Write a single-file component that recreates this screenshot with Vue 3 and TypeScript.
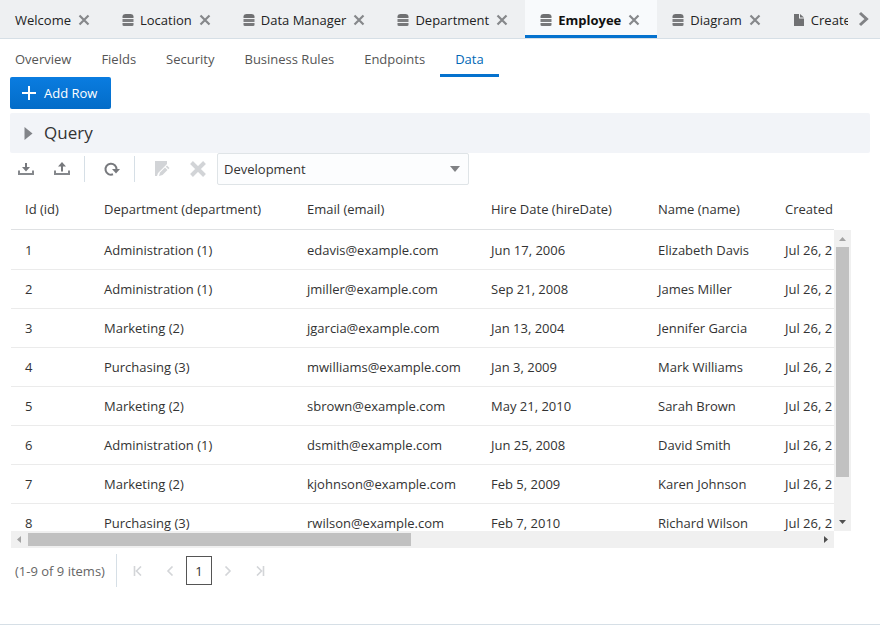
<script setup lang="ts">
import { ref } from 'vue'

interface DocumentTab {
  label: string
  icon: 'data' | 'page' | null
}

interface Employee {
  id: number
  department: string
  email: string
  hireDate: string
  name: string
  created: string
}

const documents: DocumentTab[] = [
  { label: 'Welcome', icon: null },
  { label: 'Location', icon: 'data' },
  { label: 'Data Manager', icon: 'data' },
  { label: 'Department', icon: 'data' },
  { label: 'Employee', icon: 'data' },
  { label: 'Diagram', icon: 'data' },
  { label: 'Create', icon: 'page' },
]
const activeDocument = ref('Employee')

const sections = ['Overview', 'Fields', 'Security', 'Business Rules', 'Endpoints', 'Data']
const activeSection = ref('Data')

const environment = ref('Development')

const columns = [
  { key: 'id', label: 'Id (id)' },
  { key: 'department', label: 'Department (department)' },
  { key: 'email', label: 'Email (email)' },
  { key: 'hire', label: 'Hire Date (hireDate)' },
  { key: 'name', label: 'Name (name)' },
  { key: 'created', label: 'Created' },
]

const employees: Employee[] = [
  { id: 1, department: 'Administration (1)', email: 'edavis@example.com', hireDate: 'Jun 17, 2006', name: 'Elizabeth Davis', created: 'Jul 26, 2' },
  { id: 2, department: 'Administration (1)', email: 'jmiller@example.com', hireDate: 'Sep 21, 2008', name: 'James Miller', created: 'Jul 26, 2' },
  { id: 3, department: 'Marketing (2)', email: 'jgarcia@example.com', hireDate: 'Jan 13, 2004', name: 'Jennifer Garcia', created: 'Jul 26, 2' },
  { id: 4, department: 'Purchasing (3)', email: 'mwilliams@example.com', hireDate: 'Jan 3, 2009', name: 'Mark Williams', created: 'Jul 26, 2' },
  { id: 5, department: 'Marketing (2)', email: 'sbrown@example.com', hireDate: 'May 21, 2010', name: 'Sarah Brown', created: 'Jul 26, 2' },
  { id: 6, department: 'Administration (1)', email: 'dsmith@example.com', hireDate: 'Jun 25, 2008', name: 'David Smith', created: 'Jul 26, 2' },
  { id: 7, department: 'Marketing (2)', email: 'kjohnson@example.com', hireDate: 'Feb 5, 2009', name: 'Karen Johnson', created: 'Jul 26, 2' },
  { id: 8, department: 'Purchasing (3)', email: 'rwilson@example.com', hireDate: 'Feb 7, 2010', name: 'Richard Wilson', created: 'Jul 26, 2' },
]
</script>

<template>
  <div class="page">
    <header class="doc-bar">
      <nav class="doc-tabs" aria-label="Open documents">
        <div
          v-for="doc in documents"
          :key="doc.label"
          class="doc-tab"
          :class="{ active: doc.label === activeDocument }"
        >
          <button type="button" class="doc-label" @click="activeDocument = doc.label">
            <svg v-if="doc.icon === 'data'" width="12" height="12" viewBox="0 0 12 12" aria-hidden="true">
              <path d="M0.500 4V2Q1 0 3.500 0H8.500Q11 0 11.500 2V4Z" fill="#6f7072" />
              <rect x="0.500" y="5" width="11" height="3" fill="#7e7f81" />
              <path d="M0.500 9H11.500V11Q11.500 12 10 12H2Q.5 12 .5 11Z" fill="#77787a" />
            </svg>
            <svg v-else-if="doc.icon === 'page'" width="12" height="12" viewBox="0 0 12 12" aria-hidden="true">
              <path d="M1 0H6V4.500H11V12H1Z" fill="#707173" />
              <path d="M7 0L11 3.500H7Z" fill="#707173" />
            </svg>
            <span>{{ doc.label }}</span>
          </button>
          <button type="button" class="doc-close" :aria-label="`Close ${doc.label}`">
            <svg width="12" height="12" viewBox="0 0 12 12" aria-hidden="true">
              <path d="M1.500 1.500L10.500 10.500M10.500 1.500L1.500 10.500" stroke="#86888b" stroke-width="2.200" />
            </svg>
          </button>
        </div>
      </nav>
      <button type="button" class="doc-next" aria-label="Next tabs">
        <svg width="12" height="16" viewBox="0 0 12 16" aria-hidden="true">
          <path d="M2 2L8.500 8L2 14" fill="none" stroke="#808285" stroke-width="3" />
        </svg>
      </button>
    </header>

    <nav class="sections" aria-label="Business object">
      <button
        v-for="section in sections"
        :key="section"
        type="button"
        class="section"
        :class="{ active: section === activeSection }"
        @click="activeSection = section"
      >{{ section }}</button>
    </nav>

    <main class="content">
      <button type="button" class="add-row">
        <svg width="14" height="14" viewBox="0 0 14 14" aria-hidden="true">
          <path d="M7 0V14M0 7H14" stroke="#fff" stroke-width="2" />
        </svg>
        <span>Add Row</span>
      </button>

      <button type="button" class="query">
        <svg width="9" height="13" viewBox="0 0 9 13" aria-hidden="true">
          <path d="M0.500 0L8.500 6.500L0.500 13Z" fill="#828489" />
        </svg>
        <span>Query</span>
      </button>

      <div class="toolbar">
        <div class="group">
          <button type="button" class="tool" aria-label="Import">
            <svg width="16" height="16" viewBox="0 0 16 16" aria-hidden="true">
              <path d="M1 9.500V13H15V9.500" fill="none" stroke="#85888c" stroke-width="2" />
              <path d="M7 2H9V6H12L8 10.500L4 6H7Z" fill="#77797d" />
            </svg>
          </button>
          <button type="button" class="tool" aria-label="Export">
            <svg width="16" height="16" viewBox="0 0 16 16" aria-hidden="true">
              <path d="M1 9.500V13H15V9.500" fill="none" stroke="#85888c" stroke-width="2" />
              <path d="M7 10.500H9V5.500H12L8 1L4 5.500H7Z" fill="#77797d" />
            </svg>
          </button>
        </div>
        <div class="group">
          <button type="button" class="tool" aria-label="Refresh">
            <svg width="16" height="16" viewBox="0 0 16 16" aria-hidden="true">
              <path d="M9 13.300A5.500 5.500 0 1 1 12.500 8.500" fill="none" stroke="#77797d" stroke-width="2" />
              <path d="M8 8H16L12 12.500Z" fill="#77797d" />
            </svg>
          </button>
        </div>
        <div class="group last">
          <button type="button" class="tool" aria-label="Edit" disabled>
            <svg width="16" height="16" viewBox="0 0 16 16" aria-hidden="true">
              <path d="M1 0H13V3L4 12L3 15H1Z" fill="#d2d4d7" />
              <path d="M5 15L6 11.500L11 6.500L13.500 9L8.500 14Z" fill="#d2d4d7" />
              <path d="M11.800 5.700L13 4.500L15.500 7L14.300 8.200Z" fill="#d2d4d7" />
            </svg>
          </button>
          <button type="button" class="tool" aria-label="Delete" disabled>
            <svg width="16" height="16" viewBox="0 0 16 16" aria-hidden="true">
              <path d="M1.500 1.500L14.500 14.500M14.500 1.500L1.500 14.500" stroke="#d2d4d7" stroke-width="4" />
            </svg>
          </button>
        </div>
        <div class="picker">
          <select v-model="environment" aria-label="Environment">
            <option>Development</option>
          </select>
          <svg class="picker-arrow" width="10" height="6" viewBox="0 0 10 6" aria-hidden="true">
            <path d="M0 0H10L5 6Z" fill="#808285" />
          </svg>
        </div>
      </div>

      <section class="grid">
        <div class="viewport">
          <table>
            <colgroup>
              <col v-for="column in columns" :key="column.key" :class="`col-${column.key}`" />
            </colgroup>
            <thead>
              <tr>
                <th v-for="column in columns" :key="column.key" scope="col">{{ column.label }}</th>
              </tr>
            </thead>
            <tbody>
              <tr v-for="row in employees" :key="row.id">
                <td>{{ row.id }}</td>
                <td>{{ row.department }}</td>
                <td>{{ row.email }}</td>
                <td>{{ row.hireDate }}</td>
                <td>{{ row.name }}</td>
                <td>{{ row.created }}</td>
              </tr>
            </tbody>
          </table>
        </div>
        <div class="bar vertical">
          <svg width="17" height="17" viewBox="0 0 17 17" aria-hidden="true"><path d="M5 11H12L8.500 7Z" fill="#a3a3a3" /></svg>
          <div class="track"><div class="thumb"></div></div>
          <svg width="17" height="17" viewBox="0 0 17 17" aria-hidden="true"><path d="M5 6H12L8.500 10Z" fill="#505050" /></svg>
        </div>
        <div class="bar horizontal">
          <svg width="17" height="17" viewBox="0 0 17 17" aria-hidden="true"><path d="M10 5V12L6 8.500Z" fill="#a3a3a3" /></svg>
          <div class="track"><div class="thumb"></div></div>
          <svg width="17" height="17" viewBox="0 0 17 17" aria-hidden="true"><path d="M7 5V12L11 8.500Z" fill="#505050" /></svg>
        </div>
      </section>

      <footer class="pager">
        <span class="summary">(1-9 of 9 items)</span>
        <nav class="pages" aria-label="Pages">
          <button type="button" class="step" aria-label="First page" disabled>
            <svg width="10" height="10" viewBox="0 0 10 10" aria-hidden="true"><path d="M1.500 0V10M8 0.500L3.500 5L8 9.500" /></svg>
          </button>
          <button type="button" class="step" aria-label="Previous page" disabled>
            <svg width="10" height="10" viewBox="0 0 10 10" aria-hidden="true"><path d="M7.500 0.500L3 5L7.500 9.500" /></svg>
          </button>
          <button type="button" class="current" aria-current="page">1</button>
          <button type="button" class="step" aria-label="Next page" disabled>
            <svg width="10" height="10" viewBox="0 0 10 10" aria-hidden="true"><path d="M2.500 0.500L7 5L2.500 9.500" /></svg>
          </button>
          <button type="button" class="step" aria-label="Last page" disabled>
            <svg width="10" height="10" viewBox="0 0 10 10" aria-hidden="true"><path d="M8.500 0V10M2 0.500L6.500 5L2 9.500" /></svg>
          </button>
        </nav>
      </footer>
    </main>
  </div>
</template>

<style>
body {
  background: #fff;
}
</style>

<style scoped>
.page {
  box-sizing: border-box;
  min-height: 100vh;
  border-bottom: 1px solid #d6dfe6;
  overflow: hidden;
  color: #333;
  font-family: 'Open Sans', 'Noto Sans', sans-serif;
  font-size: 13px;
  line-height: 20px;
}

button {
  margin: 0;
  padding: 0;
  border: 0;
  background: none;
  color: inherit;
  font: inherit;
  cursor: pointer;
}

svg {
  display: block;
  flex: none;
}

.doc-bar {
  display: flex;
  height: 38px;
  border-bottom: 1px solid #d6dfe6;
  background: #eef0f2;
}

.doc-tabs {
  display: flex;
  flex: 1;
  min-width: 0;
  overflow: hidden;
}

.doc-tab {
  display: flex;
  flex: none;
  align-items: center;
  gap: 7px;
  box-sizing: border-box;
  padding: 5px 17px 0 15px;
  border-bottom: 3px solid transparent;
}

.doc-label {
  display: flex;
  align-items: center;
  gap: 6px;
  color: #222;
  white-space: nowrap;
}

.doc-tab.active {
  border-bottom-color: #0572ce;
  background: #f8fafc;
}

.doc-tab.active .doc-label {
  color: #111;
  font-weight: 700;
}

.doc-next {
  display: flex;
  align-items: center;
  justify-content: center;
  width: 32px;
}

.sections {
  display: flex;
  height: 38px;
}

.section {
  box-sizing: border-box;
  padding: 5px 15px 0;
  border-bottom: 3px solid transparent;
  color: #555;
  white-space: nowrap;
}

.section.active {
  border-bottom-color: #0572ce;
  color: #0067b5;
}

.content {
  padding: 0 10px;
}

.add-row {
  display: flex;
  align-items: center;
  gap: 8px;
  height: 32px;
  padding: 0 14px 0 12px;
  border-radius: 2px;
  background: linear-gradient(#0a7ce0, #036cc8);
  color: #fff;
}

.query {
  display: flex;
  align-items: center;
  gap: 11px;
  width: 100%;
  height: 40px;
  margin-top: 4px;
  padding: 0 14px;
  border-radius: 2px;
  background: #f2f4f8;
  font-size: 17px;
}

.toolbar {
  display: flex;
  align-items: center;
  height: 32px;
}

.group {
  display: flex;
  align-items: center;
  gap: 20px;
  height: 26px;
  padding: 0 14px 0 19px;
  border-right: 1px solid #d6dfe6;
}

.group:first-child {
  padding-left: 8px;
}

.group.last {
  padding-right: 11px;
  border-right: 0;
}

.tool:disabled,
.step:disabled {
  cursor: default;
}

.picker {
  display: grid;
  align-items: center;
  width: 252px;
}

.picker select {
  grid-area: 1 / 1;
  height: 32px;
  padding: 0 28px 0 6px;
  border: 1px solid #dfe4e7;
  border-radius: 2px;
  appearance: none;
  background: #fcfdfe;
  color: #333;
  font: inherit;
}

.picker-arrow {
  grid-area: 1 / 1;
  justify-self: end;
  margin-right: 9px;
  pointer-events: none;
}

.grid {
  display: grid;
  grid-template-columns: minmax(0, 1fr) 17px;
  margin: 4px 19px 0 1px;
}

.viewport {
  height: 342px;
  overflow: hidden;
}

table {
  width: 1695px;
  border-collapse: separate;
  border-spacing: 0;
  table-layout: fixed;
}

.col-id {
  width: 79px;
}

.col-department {
  width: 203px;
}

.col-email {
  width: 184px;
}

.col-hire {
  width: 167px;
}

.col-name {
  width: 127px;
}

th,
td {
  box-sizing: border-box;
  height: 39px;
  padding: 0 0 0 14px;
  border-bottom: 1px solid #ebebeb;
  font-weight: 400;
  text-align: left;
  white-space: nowrap;
}

th {
  height: 41px;
  border-bottom-color: #dfe1e3;
}

tbody tr:first-child td {
  height: 40px;
}

.bar {
  display: flex;
  background: #f0f0f0;
}

.track {
  flex: 1;
}

.thumb {
  background: #c1c1c1;
}

.vertical {
  flex-direction: column;
  margin-top: 41px;
}

.vertical .thumb {
  height: 86%;
  margin: 0 2px;
}

.horizontal .track {
  display: flex;
}

.horizontal .thumb {
  width: 48.5%;
  margin: 2px 0;
}

.pager {
  display: flex;
  align-items: center;
  height: 33px;
  margin-top: 6px;
  padding-left: 5px;
}

.summary {
  padding: 7px 11px 6px 0;
  border-right: 1px solid #d6dfe6;
  color: #666;
}

.pages {
  display: flex;
  align-items: center;
  margin-left: 5px;
}

.step {
  display: flex;
  align-items: center;
  justify-content: center;
  width: 32px;
  height: 28px;
}

.step path {
  fill: none;
  stroke: #d3d5d8;
  stroke-width: 1.6;
}

.current {
  box-sizing: border-box;
  width: 26px;
  height: 29px;
  border: 1px solid #555;
}
</style>
